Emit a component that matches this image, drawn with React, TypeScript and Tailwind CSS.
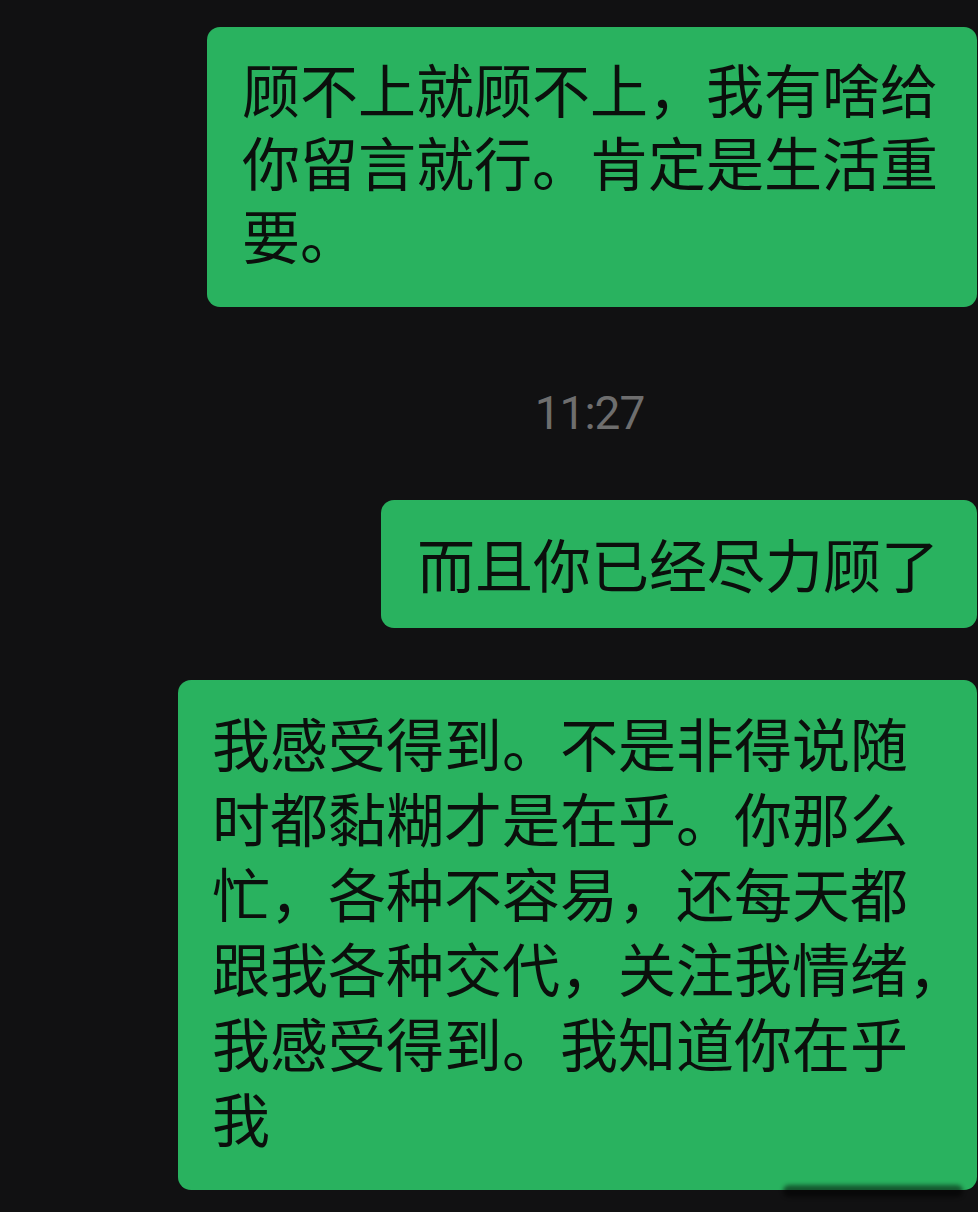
import React from 'react';

const CJK = { fontFamily: '"Noto Sans CJK SC", "Noto Sans", sans-serif' };

const Bubble: React.FC<{ lines: string[]; className: string; children?: React.ReactNode }> = ({ lines, className, children }) => (
  <div className={`relative bg-[#29b25f] rounded-[13px] text-[#0b0f0c] text-[58px] whitespace-nowrap ${className}`}>
    {lines.map((l, i) => (
      <div key={i}>{l}</div>
    ))}
    {children}
  </div>
);

export default function App() {
  return (
    <div className="min-h-screen w-full bg-[#111112] flex flex-col items-end pr-[1px] pt-[27px] pb-[22px] overflow-hidden" style={CJK}>
      {/* first message */}
      <Bubble
        className="w-[770px] pl-[35px] pt-[25px] pb-[36px] leading-[73px]"
        lines={['顾不上就顾不上，我有啥给', '你留言就行。肯定是生活重', '要。']}
      />

      {/* time */}
      <div className="w-full pl-[202px] flex justify-center mt-[82px] mb-[63px]">
        <span className="text-[#6e6e6e] text-[46px] leading-[48px] tracking-[-1px]" style={{ fontFamily: 'Roboto, "Noto Sans", sans-serif' }}>
          11:27
        </span>
      </div>

      <Bubble className="w-[596px] pl-[36px] pt-[26px] pb-[28px] leading-[74px]" lines={['而且你已经尽力顾了']} />

      <Bubble
        className="w-[799px] pl-[34px] pt-[25px] pb-[35px] mt-[52px] leading-[75px]"
        lines={[
          '我感受得到。不是非得说随',
          '时都黏糊才是在乎。你那么',
          '忙，各种不容易，还每天都',
          '跟我各种交代，关注我情绪，',
          '我感受得到。我知道你在乎',
          '我',
        ]}
      >
        {/* faint watermark smear */}
        <div className="absolute bottom-[-7px] right-[14px] w-[180px] h-[12px] rounded-full bg-black opacity-50 blur-[2px]" />
      </Bubble>
    </div>
  );
}
